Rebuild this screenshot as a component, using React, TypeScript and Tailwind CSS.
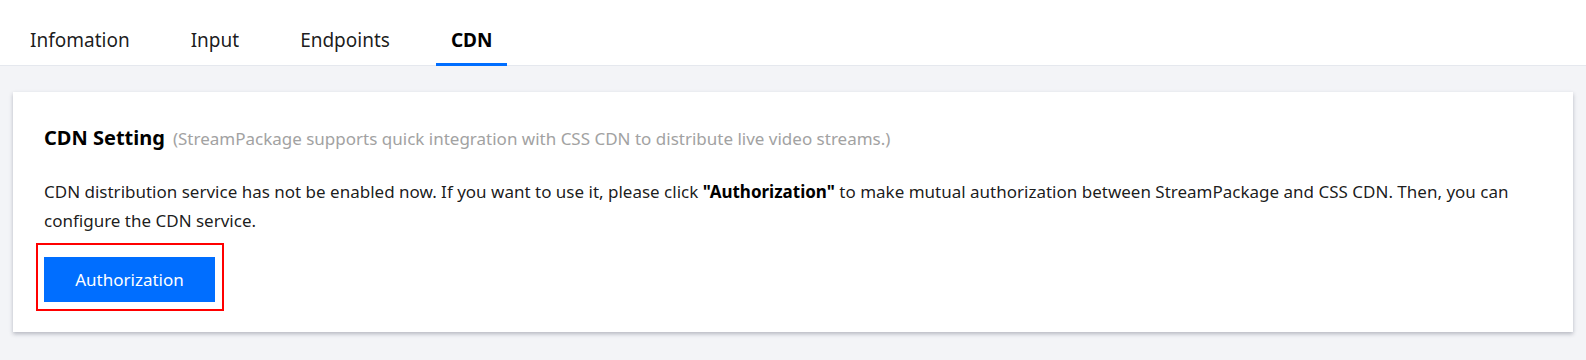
import React from "react";

const font = { fontFamily: '"Segoe UI", "Noto Sans", "Open Sans", sans-serif' };

function Tab({ label, active }: { label: string; active?: boolean }) {
  return (
    <div className="relative flex h-full items-end px-[15px] pb-[11px]">
      <span
        className={
          "text-[19px] leading-[28px] " +
          (active ? "font-bold text-black" : "text-[rgba(0,0,0,0.9)]")
        }
      >
        {label}
      </span>
      {active && <div className="absolute bottom-[-1px] left-0 right-0 h-[3px] bg-[#006eff]" />}
    </div>
  );
}

export default function App() {
  return (
    <div className="h-[360px] w-full bg-[#f3f4f7]" style={font}>
      <div className="flex h-[66px] items-stretch gap-[31px] border-b border-[#e5e8ee] bg-white pl-[15px]">
        <Tab label="Infomation" />
        <Tab label="Input" />
        <Tab label="Endpoints" />
        <Tab label="CDN" active />
      </div>
      <div className="mx-[13px] mt-[26px] bg-white px-[31px] pb-[21px] pt-[32px] shadow-[0_2px_4px_rgba(54,58,80,0.32)]">
        <div className="flex items-baseline gap-[8px]">
          <span className="text-[20px] font-bold leading-[28px] text-black">CDN Setting</span>
          <span className="text-[17px] leading-[28px] text-[#a2a2a2]">
            (StreamPackage supports quick integration with CSS CDN to distribute live video streams.)
          </span>
        </div>
        <p className="mt-[24px] text-[17px] leading-[29px] text-[rgba(0,0,0,0.9)]">
          CDN distribution service has not be enabled now. If you want to use it, please click{" "}
          <b className="font-bold text-black">"Authorization"</b> to make mutual authorization between
          StreamPackage and CSS CDN. Then, you can configure the CDN service.
        </p>
        <div className="-ml-[8px] mt-[8px] w-[188px] border-2 border-[#ff0000] pb-[7px] pl-[6px] pr-[7px] pt-[12px]">
          <button className="flex h-[45px] w-[171px] items-center justify-center bg-[#006eff] text-[17px] text-white">
            Authorization
          </button>
        </div>
      </div>
    </div>
  );
}
